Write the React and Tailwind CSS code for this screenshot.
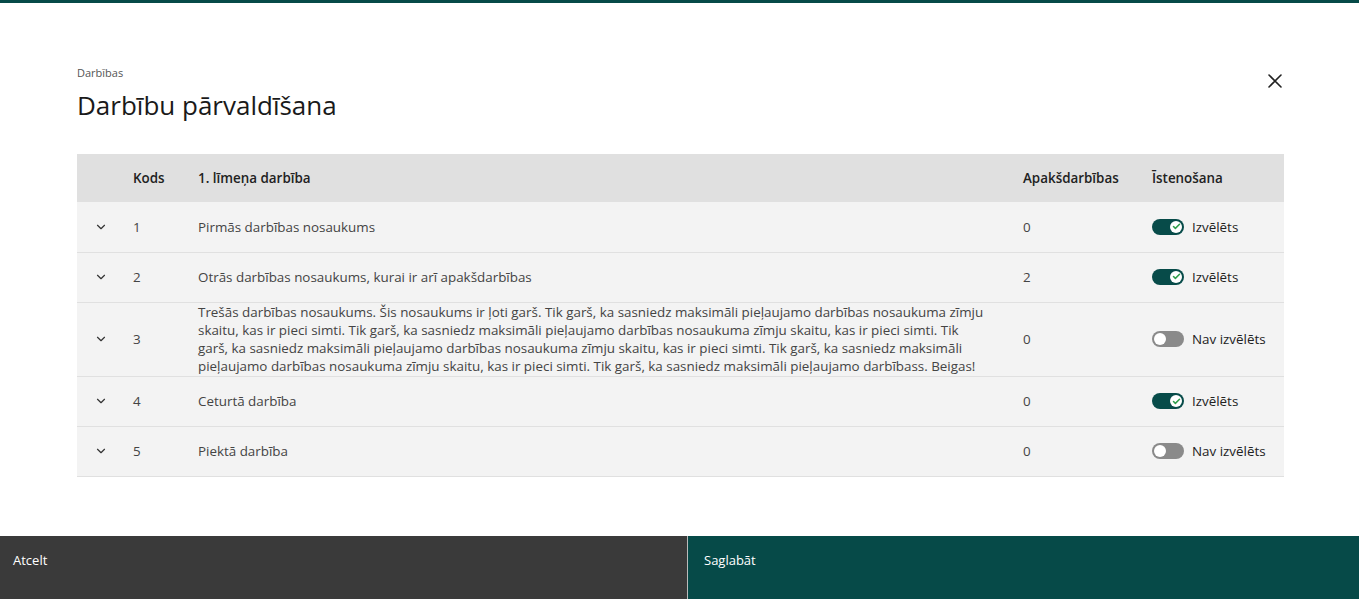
import { ChevronDown, Check } from "lucide-react";

const rows = [
  { code: "1", name: "Pirmās darbības nosaukums", sub: 0, on: true },
  { code: "2", name: "Otrās darbības nosaukums, kurai ir arī apakšdarbības", sub: 2, on: true },
  {
    code: "3",
    name:
      "Trešās darbības nosaukums. Šis nosaukums ir ļoti garš. Tik garš, ka sasniedz maksimāli pieļaujamo darbības nosaukuma zīmju skaitu, kas ir pieci simti. Tik garš, ka sasniedz maksimāli pieļaujamo darbības nosaukuma zīmju skaitu, kas ir pieci simti. Tik garš, ka sasniedz maksimāli pieļaujamo darbības nosaukuma zīmju skaitu, kas ir pieci simti. Tik garš, ka sasniedz maksimāli pieļaujamo darbības nosaukuma zīmju skaitu, kas ir pieci simti. Tik garš, ka sasniedz maksimāli pieļaujamo darbībass. Beigas!",
    sub: 0,
    on: false,
  },
  { code: "4", name: "Ceturtā darbība", sub: 0, on: true },
  { code: "5", name: "Piektā darbība", sub: 0, on: false },
];

const Toggle = ({ on }) => (
  <div className="flex items-center gap-[8px]">
    {on ? (
      <span className="flex h-[16px] w-[32px] items-center justify-end rounded-full bg-[#074b49] pr-[2px]">
        <span className="flex h-[12px] w-[12px] items-center justify-center rounded-full bg-white">
          <Check className="h-[9px] w-[9px] text-[#2e9e4a]" strokeWidth={4} />
        </span>
      </span>
    ) : (
      <span className="flex h-[16px] w-[32px] items-center rounded-full bg-[#8a8a8a] pl-[2px]">
        <span className="h-[12px] w-[12px] rounded-full bg-white" />
      </span>
    )}
    <span className="text-[13.4px] text-[#222]">{on ? "Izvēlēts" : "Nav izvēlēts"}</span>
  </div>
);

const App = () => {
  return (
    <div
      className="flex h-[599px] flex-col bg-white"
      style={{ fontFamily: '"Open Sans", "Noto Sans", sans-serif' }}
    >
      <div className="h-[3px] bg-[#064a48]" />
      <div className="flex-1 pl-[77px] pr-[75px] pt-[63px]">
        <div className="flex items-start justify-between">
          <div>
            <div className="text-[11px] leading-[14px] text-[#555]">Darbības</div>
            <h1 className="mt-[9px] text-[26px] leading-[32px] text-[#1a1a1a]">Darbību pārvaldīšana</h1>
          </div>
          <button className="mt-[8px] mr-[2px] text-[#222]">
            <svg width="14" height="14" viewBox="0 0 14 14" stroke="currentColor" strokeWidth="1.6" strokeLinecap="round">
              <path d="M1 1 L13 13 M13 1 L1 13" />
            </svg>
          </button>
        </div>

        <table className="mt-[33px] w-full border-collapse text-[13.4px]">
          <thead>
            <tr className="h-[48px] bg-[#e0e0e0] text-left text-[#222]">
              <th className="w-[56px]" />
              <th className="w-[65px] font-semibold">Kods</th>
              <th className="font-semibold">1. līmeņa darbība</th>
              <th className="w-[129px] font-semibold">Apakšdarbības</th>
              <th className="w-[132px] font-semibold">Īstenošana</th>
            </tr>
          </thead>
          <tbody>
            {rows.map((r) => (
              <tr key={r.code} className="border-b border-[#e0e0e0] bg-[#f3f3f3] text-[#444]">
                <td className="h-[50px]">
                  <ChevronDown className="ml-[17px] h-[14px] w-[14px] text-[#333]" strokeWidth={2} />
                </td>
                <td>{r.code}</td>
                <td className="pr-[36px] leading-[18.3px]">{r.name}</td>
                <td>{r.sub}</td>
                <td>
                  <Toggle on={r.on} />
                </td>
              </tr>
            ))}
          </tbody>
        </table>
      </div>
      <div className="flex h-[63px] text-[13px] text-white">
        <button className="flex w-[687px] items-start bg-[#3a3a3a] pl-[13px] pt-[15px] text-left">
          Atcelt
        </button>
        <div className="w-px bg-[#bbb]" />
        <button className="flex flex-1 items-start bg-[#064a48] pl-[16px] pt-[15px] text-left">
          Saglabāt
        </button>
      </div>
    </div>
  );
};

export default App;
